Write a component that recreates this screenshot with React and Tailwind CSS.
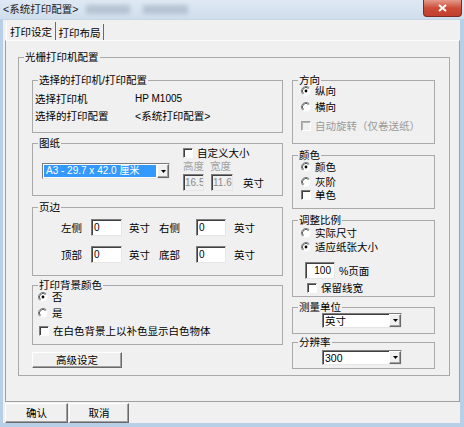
import React from "react";

const FONT = "font-['Liberation_Sans','Noto_Sans_CJK_SC',sans-serif]";
const SUNKEN =
  "border border-t-[#7c7c7c] border-l-[#7c7c7c] border-r-[#e6e6e6] border-b-[#e6e6e6] shadow-[inset_1px_1px_0_#3f3f3f]";
const RAISED =
  "border border-t-white border-l-white border-r-[#6a6a6a] border-b-[#6a6a6a] shadow-[inset_-1px_-1px_0_#a0a0a0]";

function Group({ title, className = "", bodyClass = "", children }) {
  return (
    <fieldset className={`min-w-0 border border-[#a9a9a9] ${className}`}>
      <legend className="ml-[5px] px-[1px] text-[10.5px] leading-[12px] text-black">{title}</legend>
      <div className={bodyClass}>{children}</div>
    </fieldset>
  );
}

function Radio({ checked }) {
  return (
    <svg width="10" height="10" viewBox="0 0 10 10" className="shrink-0">
      <circle cx="5" cy="5" r="4.5" fill="#fff" />
      <path d="M1.8 8.2A4.5 4.5 0 0 1 8.2 1.8" fill="none" stroke="#7a7a7a" />
      <path d="M2.5 7.5A3.5 3.5 0 0 1 7.5 2.5" fill="none" stroke="#3a3a3a" strokeWidth="0.8" />
      {checked && <circle cx="5" cy="5" r="1.4" fill="#000" />}
    </svg>
  );
}

function Check({ disabled }) {
  return (
    <span
      className={
        disabled
          ? "w-[10px] h-[10px] shrink-0 border border-t-[#a0a0a0] border-l-[#a0a0a0] border-r-white border-b-white bg-[#f0f0f0] shadow-[inset_1px_1px_0_#b4b4b4]"
          : "w-[10px] h-[10px] shrink-0 border border-t-[#7c7c7c] border-l-[#7c7c7c] border-r-white border-b-white bg-white shadow-[inset_1px_1px_0_#3f3f3f]"
      }
    />
  );
}

function Option({ type, checked, disabled, label, className = "" }) {
  return (
    <div className={`flex items-center h-[12px] ${className}`}>
      {type === "radio" ? <Radio checked={checked} /> : <Check disabled={disabled} />}
      <span className={`ml-[4px] text-[10.5px] leading-[12px] whitespace-nowrap ${disabled ? "text-[#9a9a9a]" : "text-black"}`}>
        {label}
      </span>
    </div>
  );
}

function Arrow() {
  return (
    <div className={`w-[12px] h-full shrink-0 bg-[#f0f0f0] flex items-center justify-center ${RAISED}`}>
      <svg width="5" height="3" viewBox="0 0 5 3">
        <path d="M0 0H5L2.5 3Z" fill="#000" />
      </svg>
    </div>
  );
}

function Select({ value, className = "" }) {
  return (
    <div className={`flex bg-white ${SUNKEN} ${className}`}>
      <div className="flex-1 min-w-0 pl-[2px] flex items-center text-[10.5px] leading-[12px]">{value}</div>
      <Arrow />
    </div>
  );
}

function Field({ value, className = "" }) {
  return (
    <div className={`bg-white flex items-center pl-[2px] text-[10px] leading-[12px] ${SUNKEN} ${className}`}>
      {value}
    </div>
  );
}

export default function App() {
  return (
    <div className={`w-[464px] h-[427px] bg-[#b7cfe7] flex flex-col overflow-hidden ${FONT}`}>
      <div className="h-[19px] shrink-0 flex items-start bg-gradient-to-b from-[#dfe9f4] to-[#cfdeed]">
        <span className="ml-[3px] mt-[3px] text-[10.5px] leading-[12px] text-[#202020]">&lt;系统打印配置&gt;</span>
        <span className="ml-[8px] mt-[5px] w-[44px] h-[9px] bg-[#a7b5c4] blur-[2px] opacity-70" />
        <span className="ml-[13px] mt-[5px] w-[45px] h-[9px] bg-[#a7b5c4] blur-[2px] opacity-70" />
        <div className="ml-auto mr-[2px] w-[39px] h-[17px] rounded-b-[4px] border border-t-0 border-[#7b2d22] bg-gradient-to-b from-[#e49a8a] via-[#cc4c38] to-[#c2402d] flex items-center justify-center">
          <svg width="9" height="8" viewBox="0 0 9 8">
            <path d="M1 1L8 7M8 1L1 7" stroke="#fff" strokeWidth="2" />
          </svg>
        </div>
      </div>

      <div className="ml-[3px] w-[457px] h-[404px] shrink-0 bg-[#f0f0f0] border-t border-[#c8d6e4] flex flex-col">
        <div className="h-[20px] shrink-0 flex items-end pl-[3px] text-[10.5px] leading-[12px]">
          <div className="w-[50px] h-[18px] pt-[2px] border-l border-white border-r border-r-[#6a6a6a] flex items-center justify-center">
            打印设定
          </div>
          <div className="w-[48px] h-[16px] pt-[2px] border-r border-[#6a6a6a] flex items-center justify-center">
            打印布局
          </div>
        </div>

        <div className="ml-[2px] w-[455px] h-[362px] shrink-0 border border-[#a0a0a0] border-t-[#fbfbfb] flex flex-col">
          <Group title="光栅打印机配置" className="ml-[12px] mt-[10px] w-[432px] h-[325px]" bodyClass="pl-[13px] pt-[11px] flex">
            <div className="w-[251px] flex flex-col">
              <Group title="选择的打印机/打印配置" className="h-[59px]" bodyClass="pl-[2px] pt-[6px] text-[10.5px] leading-[14px]">
                <div className="flex">
                  <span className="w-[100px]">选择打印机</span>
                  <span className="text-[10px]">HP M1005</span>
                </div>
                <div className="flex mt-[3px]">
                  <span className="w-[100px]">选择的打印配置</span>
                  <span>&lt;系统打印配置&gt;</span>
                </div>
              </Group>

              <Group title="图纸" className="mt-[4px] h-[59px]" bodyClass="flex">
                <div className="ml-[9px] mt-[14px] w-[128px] h-[16px] flex bg-white border border-t-[#7c7c7c] border-l-[#7c7c7c] border-r-[#e6e6e6] border-b-[#e6e6e6]">
                  <div className="flex-1 min-w-0 m-[1px] bg-[#3399ff] text-white text-[10px] leading-[12px] flex items-center pl-[2px] whitespace-nowrap">
                    A3 - 29.7 x 42.0 厘米
                  </div>
                  <Arrow />
                </div>
                <div className="ml-[13px] -mt-[2px] flex flex-col">
                  <Option type="check" label="自定义大小" className="h-[11px]" />
                  <div className="mt-[2px] flex text-[10.5px] leading-[11px] text-[#a3a3a3]">
                    <span className="w-[27px]">高度</span>
                    <span>宽度</span>
                  </div>
                  <div className="mt-[2px] flex items-center">
                    <div className={`w-[21px] h-[17px] overflow-hidden bg-[#f0f0f0] pl-[1px] flex items-center text-[10px] text-[#8a8a8a] ${SUNKEN}`}>
                      16.5
                    </div>
                    <div className={`ml-[7px] w-[22px] h-[17px] overflow-hidden bg-[#f0f0f0] pl-[1px] flex items-center text-[10px] text-[#8a8a8a] ${SUNKEN}`}>
                      11.6
                    </div>
                    <span className="ml-[10px] text-[10.5px] leading-[12px]">英寸</span>
                  </div>
                </div>
              </Group>

              <Group title="页边" className="mt-[5px] h-[75px]" bodyClass="pl-[28px] pt-[6px] text-[10.5px] leading-[12px]">
                <div className="flex items-center h-[17px]">
                  <span className="w-[30px]">左侧</span>
                  <Field value="0" className="w-[31px] h-[17px]" />
                  <span className="ml-[7px] w-[30px]">英寸</span>
                  <span className="w-[37px]">右侧</span>
                  <Field value="0" className="w-[30px] h-[17px]" />
                  <span className="ml-[8px]">英寸</span>
                </div>
                <div className="flex items-center h-[17px] mt-[10px]">
                  <span className="w-[30px]">顶部</span>
                  <Field value="0" className="w-[31px] h-[17px]" />
                  <span className="ml-[7px] w-[30px]">英寸</span>
                  <span className="w-[37px]">底部</span>
                  <Field value="0" className="w-[30px] h-[17px]" />
                  <span className="ml-[8px]">英寸</span>
                </div>
              </Group>

              <Group title="打印背景颜色" className="mt-[3px] h-[66px]" bodyClass="pl-[5px]">
                <Option type="radio" checked label="否" />
                <Option type="radio" label="是" className="mt-[4px]" />
                <Option type="check" label="在白色背景上以补色显示白色物体" className="mt-[6px] ml-[1px]" />
              </Group>

              <button className={`mt-[7px] w-[90px] h-[16px] bg-[#f0f0f0] text-[10.5px] leading-[12px] flex items-center justify-center ${RAISED}`}>
                高级设定
              </button>
            </div>

            <div className="ml-[9px] w-[143px] flex flex-col">
              <Group title="方向" className="h-[70px]" bodyClass="pl-[8px]">
                <Option type="radio" checked label="纵向" className="-mt-[1px]" />
                <Option type="radio" label="横向" className="mt-[4px]" />
                <Option type="check" disabled label="自动旋转（仅卷送纸）" className="mt-[7px]" />
              </Group>

              <Group title="颜色" className="mt-[5px] h-[60px]" bodyClass="pl-[8px]">
                <Option type="radio" checked label="颜色" />
                <Option type="radio" label="灰阶" className="mt-[3px]" />
                <Option type="check" label="单色" className="mt-[1px]" />
              </Group>

              <Group title="调整比例" className="mt-[5px] h-[83px]" bodyClass="pl-[8px]">
                <Option type="radio" label="实际尺寸" className="mt-[1px]" />
                <Option type="radio" checked label="适应纸张大小" className="mt-[2px]" />
                <div className="mt-[9px] ml-[4px] flex items-center">
                  <Field value="100" className="w-[30px] h-[17px] justify-end pr-[3px]" />
                  <span className="ml-[4px] text-[10.5px] leading-[12px]">%页面</span>
                </div>
                <Option type="check" label="保留线宽" className="mt-[3px] ml-[6px]" />
              </Group>

              <Group title="测量单位" className="mt-[4px] h-[33px]" bodyClass="pl-[29px]">
                <Select value="英寸" className="w-[80px] h-[15px]" />
              </Group>

              <Group title="分辨率" className="mt-[2px] h-[33px]" bodyClass="pl-[29px]">
                <Select value="300" className="mt-[2px] w-[80px] h-[15px]" />
              </Group>
            </div>
          </Group>
        </div>

        <div className="mt-[1px] flex text-[10.5px] leading-[12px]">
          <button className={`ml-[2px] w-[63px] h-[20px] bg-[#f0f0f0] flex items-center justify-center ${RAISED}`}>
            确认
          </button>
          <button className={`ml-[1px] w-[60px] h-[20px] bg-[#f0f0f0] flex items-center justify-center ${RAISED}`}>
            取消
          </button>
        </div>
      </div>
    </div>
  );
}
